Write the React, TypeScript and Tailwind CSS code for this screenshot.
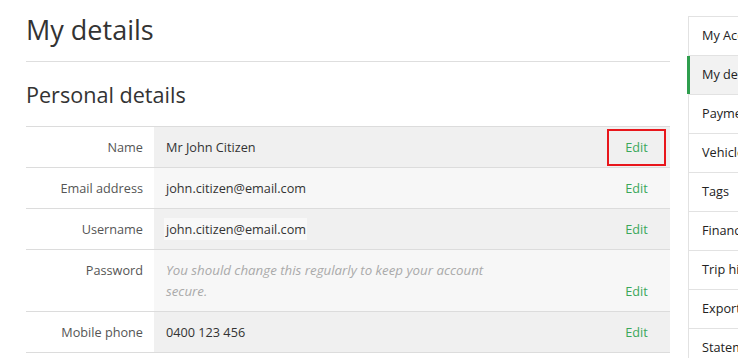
import React from "react";

const rows: { label: string; value: string; bg: string; kind?: "italic" | "hl"; boxed?: boolean }[] = [
  { label: "Name", value: "Mr John Citizen", bg: "bg-[#f0f0f0]", boxed: true },
  { label: "Email address", value: "john.citizen@email.com", bg: "bg-[#f7f7f7]" },
  { label: "Username", value: "john.citizen@email.com", bg: "bg-[#f0f0f0]", kind: "hl" },
  {
    label: "Password",
    value: "You should change this regularly to keep your account secure.",
    bg: "bg-[#f7f7f7]",
    kind: "italic",
  },
  { label: "Mobile phone", value: "0400 123 456", bg: "bg-[#f0f0f0]" },
];

const nav = ["My Account", "My details", "Payments", "Vehicles", "Tags", "Finance", "Trip history", "Export", "Statements"];

export default function App() {
  return (
    <div
      className="w-[738px] h-[358px] overflow-hidden bg-white flex text-[#333]"
      style={{ fontFamily: '"Open Sans", "Noto Sans", sans-serif' }}
    >
      <main className="w-[644px] ml-[26px] shrink-0">
        <h1 className="text-[27px] leading-[36px] font-normal mt-[12px] pb-[13px] border-b border-[#dedede] text-[#333]">
          My details
        </h1>
        <h2 className="text-[21.6px] leading-[30px] font-normal mt-[18px] mb-[16px] text-[#333]">Personal details</h2>
        <div className="border-b border-[#dcdcdc]">
          {rows.map((r) => (
            <div key={r.label} className="flex border-t border-[#dcdcdc] text-[12.7px] leading-5">
              <div className="w-[128px] shrink-0 text-right pr-[11px] py-[10px] text-[#555] bg-white">{r.label}</div>
              <div className={`flex-1 flex ${r.bg}`}>
                <div className={`flex-1 pl-[12px] ${r.kind === "italic" ? "pt-[10px] pb-[9px]" : "py-[10px]"}`}>
                  {r.kind === "italic" ? (
                    <div className="w-[340px] italic text-[13.3px] text-[#aaa] leading-[21px]">{r.value}</div>
                  ) : r.kind === "hl" ? (
                    <span className="bg-[#f8f8f8] pl-[2px] pr-[1px] -ml-[2px] py-[2px]">{r.value}</span>
                  ) : (
                    <span className="text-[#333]">{r.value}</span>
                  )}
                </div>
                <div className={`w-[63px] shrink-0 flex ${r.kind === "italic" ? "items-end pb-[2px]" : "items-center"}`}>
                  <a
                    className={`w-[59px] h-[37px] flex items-center justify-center text-[#3aa85a] border-2 ${
                      r.boxed ? "border-[#e8161b]" : "border-transparent"
                    }`}
                  >
                    Edit
                  </a>
                </div>
              </div>
            </div>
          ))}
        </div>
      </main>
      <aside className="ml-[18px] mt-[16px] w-[220px] shrink-0 border-l border-t border-[#e2e2e2] self-start">
        {nav.map((n, i) => (
          <div
            key={n}
            className={`h-[39px] flex items-center pl-[13px] text-[12.7px] text-[#222] border-b border-[#e2e2e2] relative ${
              i === 1 ? "bg-[#f2f2f2]" : "bg-white"
            }`}
          >
            {i === 1 && <span className="absolute -left-[2px] top-0 bottom-0 w-[3px] bg-[#2f9e4e]" />}
            {n}
          </div>
        ))}
      </aside>
    </div>
  );
}
